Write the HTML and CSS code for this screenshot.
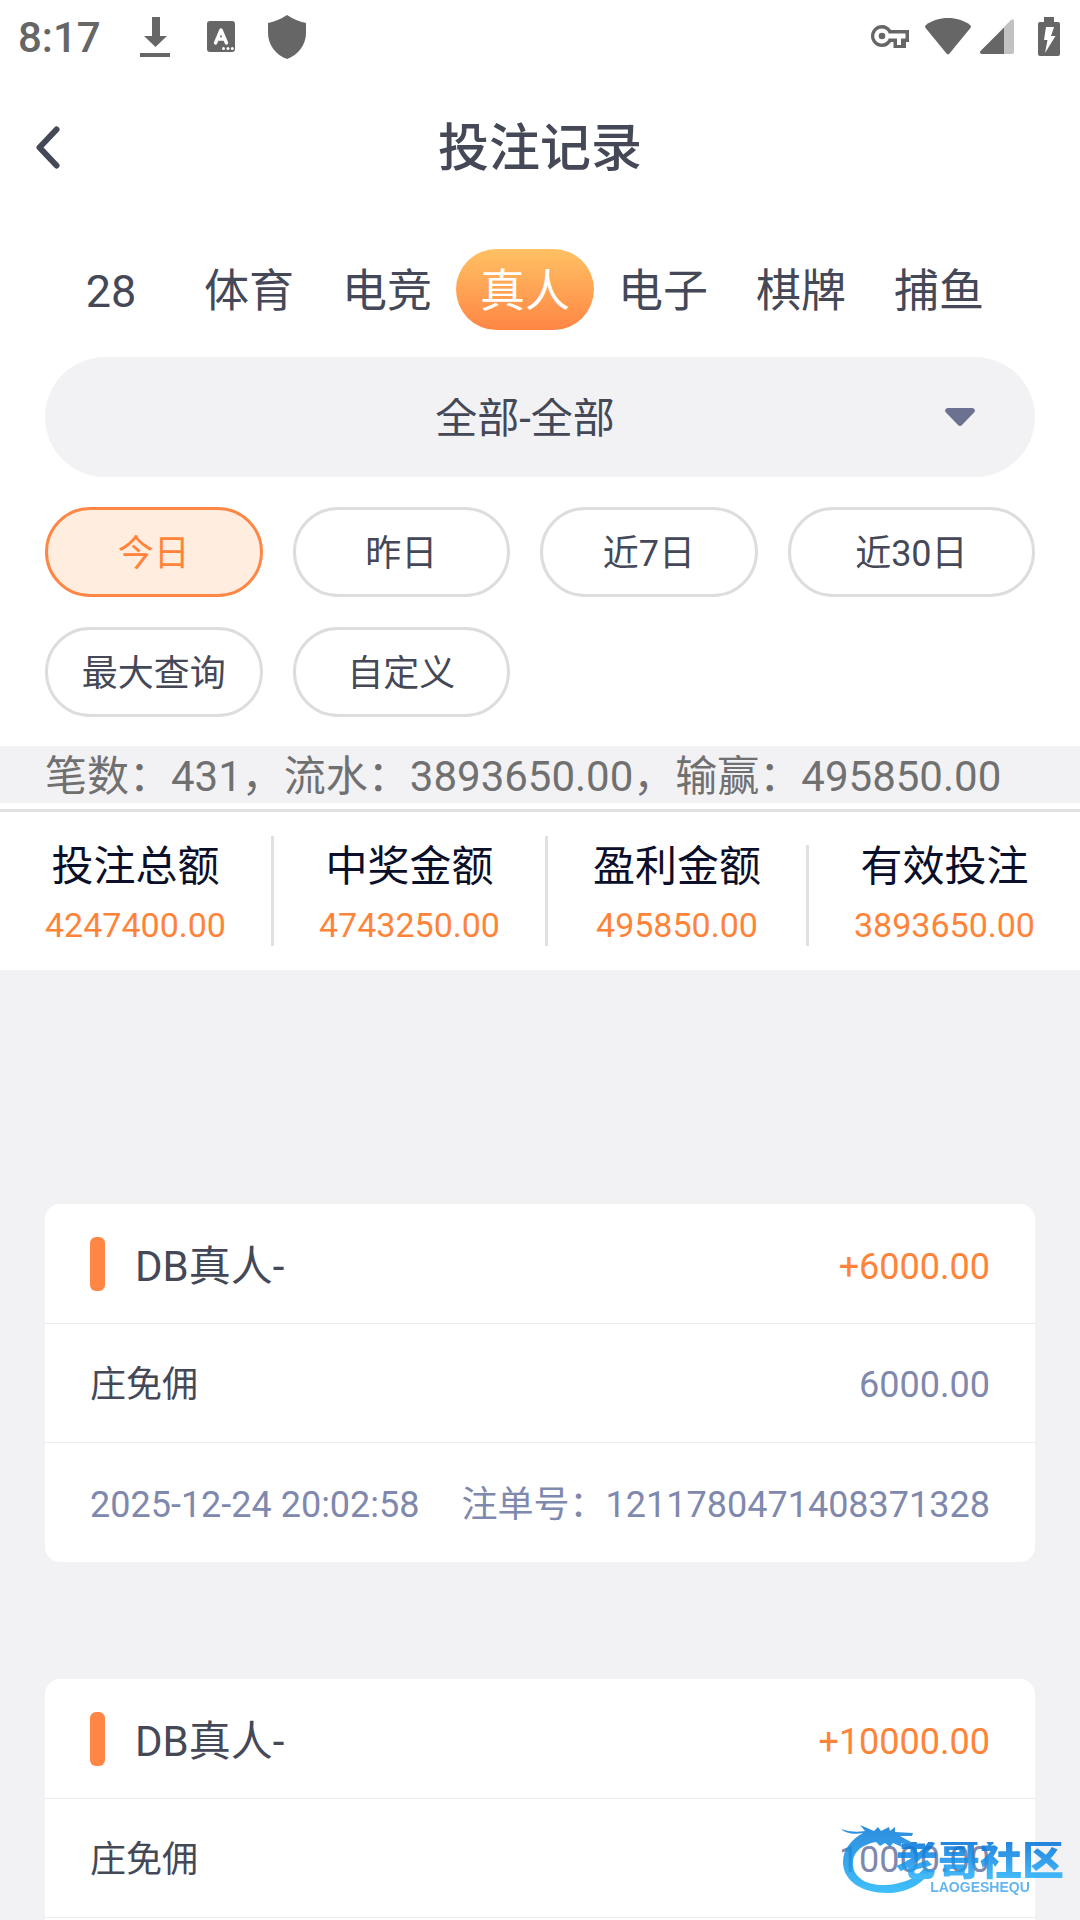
FILE: index.html
```html
<!DOCTYPE html>
<html lang="zh-CN">
<head>
<meta charset="utf-8">
<meta name="viewport" content="width=device-width, initial-scale=1">
<title>投注记录</title>
<link rel="stylesheet" href="styles.css">
</head>
<body>
<div class="app">
  <div class="status-bar">
    <span class="clock">8:17</span>
    <svg class="status-download" width="30" height="40" viewBox="0 0 30 40" aria-hidden="true"><path d="M12 0h8v19h7L15.500 30 4 19h8zM0 36h30v4H0z"/></svg>
    <svg class="status-input" width="28" height="32" viewBox="0 0 28 32" aria-hidden="true"><rect width="28" height="31" rx="3"/><path d="M8.500 22L14 9l5.500 13M10 18h8" fill="none" stroke="#fff" stroke-width="3.400" stroke-linecap="round" stroke-linejoin="round"/><g fill="#fff"><circle cx="16.500" cy="27.500" r="1.500"/><circle cx="21" cy="27.500" r="1.500"/><circle cx="25.300" cy="27.500" r="1.500"/></g></svg>
    <svg class="status-shield" width="38" height="44" viewBox="0 0 38 44" aria-hidden="true"><path d="M19 0Q28 6 38 8V18C38 30 30 40 19 44 8 40 0 30 0 18V8Q10 6 19 0z"/></svg>
    <span class="spacer"></span>
    <svg class="status-key" width="38" height="24" viewBox="0 0 38 24" aria-hidden="true"><path fill-rule="evenodd" d="M11 0c4 0 7 2 9 5h18v12h-3v6H22.500v-6H20c-2 3-5 5-9 5A11 11 0 0 1 11 0zm0 3.500a7.500 7.500 0 1 0 6.800 10H26V20h4v-6.500h4.500v-5H17.800A7.500 7.500 0 0 0 11 3.500z"/><circle cx="11" cy="11" r="3.300"/></svg>
    <svg class="status-wifi" width="46" height="37" viewBox="0 0 46 37" aria-hidden="true"><path d="M.6 10Q-.6 8.300 1 7C13-2.300 33-2.300 45 7q1.600 1.300.4 3L24.500 35.500q-1.500 1.700-3 0z"/></svg>
    <svg class="status-signal" width="34" height="35" viewBox="0 0 34 35" aria-hidden="true"><path d="M24 8L31 1q3-2 3 1v31q0 2-2 2h-8z" fill="#c2c2c2"/><path d="M24 8.500V35H2q-3-.5-1.500-3z"/></svg>
    <svg class="status-battery" width="22" height="39" viewBox="0 0 22 39" aria-hidden="true"><path d="M6 0h10v5h4q2 0 2 2v30q0 2-2 2H2q-2 0-2-2V7q0-2 2-2h4z"/><path d="M8 10h8l-3 9h4.500L7 36l2.500-13H6z" fill="#fff"/></svg>
  </div>

  <header class="title-bar">
    <button class="back" type="button" aria-label="返回"><svg width="24" height="43" viewBox="0 0 24 43" aria-hidden="true"><path d="M20.500 3.500L3.500 21.500l17 18" fill="none" stroke="#444857" stroke-width="6" stroke-linecap="round" stroke-linejoin="round"/></svg></button>
    <h1 class="title">投注记录</h1>
  </header>

  <nav class="tabs">
    <button class="tab" type="button">28</button>
    <button class="tab" type="button">体育</button>
    <button class="tab" type="button">电竞</button>
    <button class="tab tab-active" type="button">真人</button>
    <button class="tab" type="button">电子</button>
    <button class="tab" type="button">棋牌</button>
    <button class="tab" type="button">捕鱼</button>
  </nav>

  <div class="filters">
    <div class="select-wrap">
      <select class="select" aria-label="游戏类型"><option>全部-全部</option></select>
      <svg class="caret" width="30" height="18" viewBox="0 0 30 18" aria-hidden="true"><path d="M2.500 0h25q3.500 1 2 4L17 17q-2 1.800-4 0L.5 4q-1.500-3 2-4z" fill="#6b718f"/></svg>
    </div>
    <div class="chips">
      <button class="chip chip-active" type="button">今日</button>
      <button class="chip" type="button">昨日</button>
      <button class="chip" type="button">近7日</button>
      <button class="chip" type="button">近30日</button>
      <button class="chip" type="button">最大查询</button>
      <button class="chip" type="button">自定义</button>
    </div>
  </div>

  <p class="summary">笔数：431，流水：3893650.00，输赢：495850.00</p>

  <section class="stats">
    <div class="stat"><span class="stat-label">投注总额</span><span class="stat-value">4247400.00</span></div>
    <i class="divider"></i>
    <div class="stat"><span class="stat-label">中奖金额</span><span class="stat-value">4743250.00</span></div>
    <i class="divider"></i>
    <div class="stat"><span class="stat-label">盈利金额</span><span class="stat-value">495850.00</span></div>
    <i class="divider divider-short"></i>
    <div class="stat"><span class="stat-label">有效投注</span><span class="stat-value">3893650.00</span></div>
  </section>

  <main class="records">
    <article class="card">
      <div class="row row-head"><h2 class="game">DB真人-</h2><span class="win">+6000.00</span></div>
      <div class="row"><span>庄免佣</span><span class="muted">6000.00</span></div>
      <div class="row row-foot muted"><time>2025-12-24 20:02:58</time><span>注单号：1211780471408371328</span></div>
    </article>
    <article class="card">
      <div class="row row-head"><h2 class="game">DB真人-</h2><span class="win">+10000.00</span></div>
      <div class="row"><span>庄免佣</span><span class="muted">10000.00</span></div>
      <div class="row row-foot"></div>
    </article>
  </main>

  <div class="watermark">
    <svg class="dragon" width="92" height="76" viewBox="0 0 92 76" aria-hidden="true">
      <defs><linearGradient id="sea" x1="0" y1="0" x2="0" y2="1"><stop offset="0" stop-color="#0878d8"/><stop offset="1" stop-color="#1fb4fa"/></linearGradient></defs>
      <path fill="url(#sea)" d="M2 11q10 4 24 2l-5-6 14 6 4-4 3 4 8-4 1 4 5-4v5l18 1-1 3-12 0 11 6-1 3-9-2 1 4-9-4-3 4-5-4-5 3-4-4-5 1C20 29 13 36 14 47c1 14 16 21 33 20 17-1 31-7 38-17l6 3C84 67 66 75 48 75 23 75 4 63 4 44 4 31 13 21 24 15 15 17 6 15 2 11z"/>
    </svg>
    <div class="brand"><span class="brand-name">老哥社区</span><span class="brand-latin">LAOGESHEQU</span></div>
  </div>
</div>
</body>
</html>
```

FILE: styles.css
```css
* {
  box-sizing: border-box;
}

body {
  margin: 0;
  background: #f2f2f5;
  color: #444857;
  font-family: Roboto, "Noto Sans CJK SC", sans-serif;
  font-size: 36px;
  line-height: 42px;
}

button,
select {
  margin: 0;
  padding: 0;
  border: 0;
  background: none;
  color: inherit;
  font: inherit;
}

svg {
  display: block;
  flex: none;
}

.app {
  display: flex;
  flex-direction: column;
  height: 100vh;
  overflow: hidden;
}

.status-bar,
.title-bar,
.tabs,
.filters,
.stats {
  flex: none;
  background: #fff;
}

.status-bar {
  display: flex;
  align-items: center;
  height: 72px;
  padding: 1px 20px 0 18px;
  color: #666;
}

.status-bar svg {
  fill: #666;
}

.clock {
  width: 122px;
  padding-top: 2px;
  font-size: 42px;
  font-weight: 500;
}

.status-input {
  margin-left: 37px;
}

.status-shield {
  margin-left: 33px;
}

.spacer {
  flex: 1;
}

.status-wifi {
  margin-left: 16px;
}

.status-signal {
  margin-left: 9px;
}

.status-battery {
  margin-left: 24px;
}

.title-bar {
  display: grid;
  grid-template-columns: 96px 1fr 96px;
  align-items: center;
  height: 150px;
}

.back {
  display: flex;
  padding-left: 36px;
}

.title {
  margin: 0;
  padding-top: 4px;
  font-size: 51px;
  font-weight: 500;
  line-height: 72px;
  text-align: center;
}

.tabs {
  display: grid;
  grid-template-columns: repeat(7, 1fr);
  padding: 27px 72px 27px 42px;
}

.tab {
  height: 81px;
  padding-top: 4px;
  border-radius: 41px;
  font-size: 45px;
}

.tab-active {
  background: linear-gradient(#ffc163, #ff8645);
  color: #fff;
}

.filters {
  padding: 0 45px 29px;
}

.select-wrap {
  display: grid;
  align-items: center;
}

.select-wrap > * {
  grid-area: 1 / 1;
}

.select {
  width: 100%;
  height: 120px;
  padding: 4px 30px 0 0;
  border-radius: 60px;
  background: #f2f2f5;
  font-size: 42px;
  text-align: center;
  text-align-last: center;
  appearance: none;
}

.caret {
  justify-self: end;
  margin-right: 60px;
  pointer-events: none;
}

.chips {
  display: grid;
  grid-template-columns: 22fr 22fr 22fr 25fr;
  gap: 30px;
  margin-top: 30px;
}

.chip {
  height: 90px;
  padding-top: 4px;
  border: 3px solid #ddd;
  border-radius: 45px;
}

.chip-active {
  border-color: #ff8645;
  background: #ffeee0;
  color: #ff8439;
}

.summary {
  flex: none;
  margin: 0;
  padding: 4px 45px 0;
  color: #707070;
  font-size: 42px;
  line-height: 53px;
  white-space: nowrap;
}

.stats {
  display: flex;
  align-items: flex-end;
  justify-content: space-between;
  padding: 24px 45px;
  border-top: 3px solid #e0e0e0;
  box-shadow: 0 -6px #fff;
  margin-top: 6px;
}

.stat {
  display: flex;
  flex-direction: column;
  align-items: center;
  gap: 6px;
}

.stat-label {
  color: #0b0f2a;
  font-size: 42px;
  line-height: 62px;
}

.stat-value {
  color: #ff8439;
  font-size: 34px;
}

.divider {
  width: 3px;
  height: 110px;
  background: #e0e0e0;
}

.divider-short {
  height: 101px;
}

.records {
  flex: 1;
  min-height: 0;
  padding: 117px 45px 0;
  overflow-y: auto;
  scrollbar-width: none;
}

.card {
  margin-top: 117px;
  border-radius: 15px;
  background: #fff;
}

.row {
  display: flex;
  align-items: center;
  justify-content: space-between;
  height: 119px;
  padding: 4px 45px 0;
}

.row + .row {
  border-top: 1px solid #ebebeb;
}

.row-head {
  padding-top: 6px;
}

.row-foot {
  height: 120px;
}

.game {
  display: flex;
  align-items: center;
  gap: 30px;
  margin: 0;
  font-size: 42px;
  font-weight: 400;
}

.game::before {
  width: 15px;
  height: 54px;
  margin-bottom: 6px;
  border-radius: 6px;
  background: #ff8645;
  content: "";
}

.win {
  color: #ff8439;
}

.muted {
  color: #7f88ad;
}

.watermark {
  position: fixed;
  right: 16px;
  bottom: 26px;
  display: flex;
  opacity: 0.85;
  pointer-events: none;
}

.brand {
  display: flex;
  flex-direction: column;
  align-items: center;
  padding-top: 24px;
  margin-left: -35px;
}

.brand-name {
  background: linear-gradient(#0070d8, #27b2fa);
  background-clip: text;
  color: transparent;
  font-size: 42px;
  font-weight: 900;
  line-height: 38px;
}

.brand-latin {
  color: #4aa9ea;
  font-family: "Liberation Sans", sans-serif;
  font-size: 14px;
  font-weight: 700;
  line-height: 14px;
}
```
